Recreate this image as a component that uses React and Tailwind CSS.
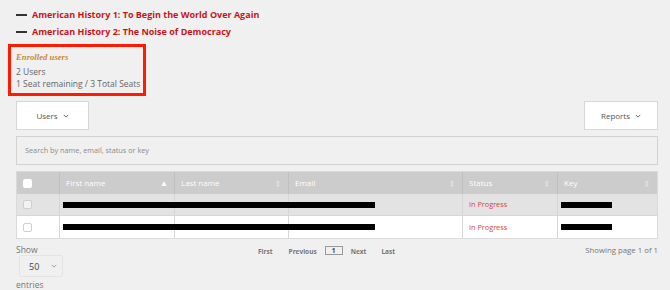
import React from 'react';

function Chevron({ className = '' }) {
   return (
      <svg className={className} width="6" height="4" viewBox="0 0 8 5" fill="none" stroke="currentColor" strokeWidth="1.2">
         <path d="M1 1l3 3 3-3" />
      </svg>
   );
}

function SortIcon({ active }) {
   if (active) {
      return <span className="text-white text-[8px] leading-none">▲</span>;
   }
   return <span className="text-[#dcdcdc] text-[9px] leading-none">⬍</span>;
}

function Box({ white }) {
   return <span className={`block w-[9px] h-[9px] rounded-[2px] border border-[#cfcfcf] ${white ? 'bg-white' : 'bg-[#f2f2f2]'}`} />;
}

export default function App() {
   const cols = [
      { name: 'First name', w: 'w-[115px]', active: true },
      { name: 'Last name', w: 'w-[114px]' },
      { name: 'Email', w: 'w-[174px]' },
      { name: 'Status', w: 'w-[95px]' },
      { name: 'Key', w: 'flex-1' },
   ];
   const rows = ['bg-[#e3e3e3]', 'bg-white'];

   return (
      <div className="bg-[#f0f0f0] w-[670px] h-[290px] overflow-hidden text-[#666]" style={{ fontFamily: '"Open Sans", sans-serif' }}>
         <div className="pt-[8px] px-4">
            <div className="flex items-center h-[14px]">
               <span className="w-[11px] h-[2px] bg-[#333] mr-[5px]" />
               <span className="text-[#c8151b] font-bold text-[9px]">American History 1: To Begin the World Over Again</span>
            </div>
            <div className="flex items-center h-[14px] mt-[3px]">
               <span className="w-[11px] h-[2px] bg-[#333] mr-[5px]" />
               <span className="text-[#c8151b] font-bold text-[9px]">American History 2: The Noise of Democracy</span>
            </div>
         </div>

         <div className="ml-2 mt-[5px] w-[138px] h-[52px] border-[3px] border-[#ff1a00] pl-[5px] pt-[5px]">
            <div className="italic font-bold text-[8.7px] text-[#c8893c] leading-[11px]" style={{ fontFamily: '"Liberation Serif", serif' }}>Enrolled users</div>
            <div className="text-[8.5px] leading-[12px] mt-[3px]">2 Users</div>
            <div className="text-[8.5px] leading-[12px]">1 Seat remaining / 3 Total Seats</div>
         </div>

         <div className="pl-4 pr-3 mt-[5px]">
            <div className="flex justify-between">
               <button className="w-[73px] h-[29px] bg-white border border-[#d6d6d6] flex items-center justify-center gap-[5px] text-[8px] text-[#555]">
                  Users <Chevron />
               </button>
               <button className="w-[74px] h-[29px] bg-white border border-[#d6d6d6] flex items-center justify-center gap-[5px] text-[8px] text-[#555]">
                  Reports <Chevron />
               </button>
            </div>

            <div className="mt-[6px] h-[29px] border-[1.5px] border-[#d2d2d2] flex items-center pl-[8px] text-[7.3px] text-[#8a8a8a]">
               Search by name, email, status or key
            </div>

            <div className="mt-[6px] border border-[#dadada]">
               <div className="flex h-[22px] bg-[#cccccc] text-white text-[8px]">
                  <div className="w-[43px] flex items-center pl-[6px] border-r border-[#c0c0c0]">
                     <span className="block w-[9px] h-[9px] rounded-[2px] bg-white" />
                  </div>
                  {cols.map((c, i) => (
                     <div key={c.name} className={`${c.w} flex items-center justify-between px-[6px] ${i < cols.length - 1 ? 'border-r border-[#c0c0c0]' : ''}`}>
                        <span>{c.name}</span>
                        <SortIcon active={c.active} />
                     </div>
                  ))}
               </div>
               {rows.map((bg, r) => (
                  <div key={r} className={`relative flex h-[22px] ${bg} text-[7.3px] ${r === 0 ? 'border-b border-[#d6d6d6]' : ''}`}>
                     <div className="w-[43px] flex items-center pl-[6px] border-r border-[#d6d6d6]">
                        <Box white={r === 1} />
                     </div>
                     <div className="w-[115px] border-r border-[#d6d6d6]" />
                     <div className="w-[114px] border-r border-[#d6d6d6]" />
                     <div className="w-[174px] border-r border-[#d6d6d6]" />
                     <div className="w-[95px] border-r border-[#d6d6d6] flex items-center pl-[6px] text-[#d0443c]">In Progress</div>
                     <div className="flex-1 flex items-center pl-[3px]">
                        <span className="block w-[51px] h-[6px] bg-black" />
                     </div>
                     <span className="absolute left-[46px] top-[8px] w-[312px] h-[6px] bg-black" />
                  </div>
               ))}
            </div>

            <div className="flex mt-[5px]">
               <div className="w-[60px] text-[8.5px] leading-[11px] text-[#777]">
                  <div>Show</div>
                  <div className="ml-[3px] w-[44px] h-[22px] border border-[#e4e4e4] rounded-[2px] flex items-center justify-between pl-[9px] pr-[5px] text-[#444] text-[9px]">
                     50 <Chevron className="text-[#999]" />
                  </div>
                  <div className="mt-[2px]">entries</div>
               </div>
               <div className="flex items-start text-[6.5px] font-bold text-[#777] ml-[182px] mt-[3px]">
                  <span>First</span>
                  <span className="ml-[16px]">Previous</span>
                  <span className="ml-[8px] w-[18px] text-center border border-[#999] leading-[7px] text-[#444] -mt-[1px]">1</span>
                  <span className="ml-[8px]">Next</span>
                  <span className="ml-[15px]">Last</span>
               </div>
               <div className="flex-1 text-right text-[7.8px] text-[#777] mt-[1px]">Showing page 1 of 1</div>
            </div>
         </div>
      </div>
   );
}
